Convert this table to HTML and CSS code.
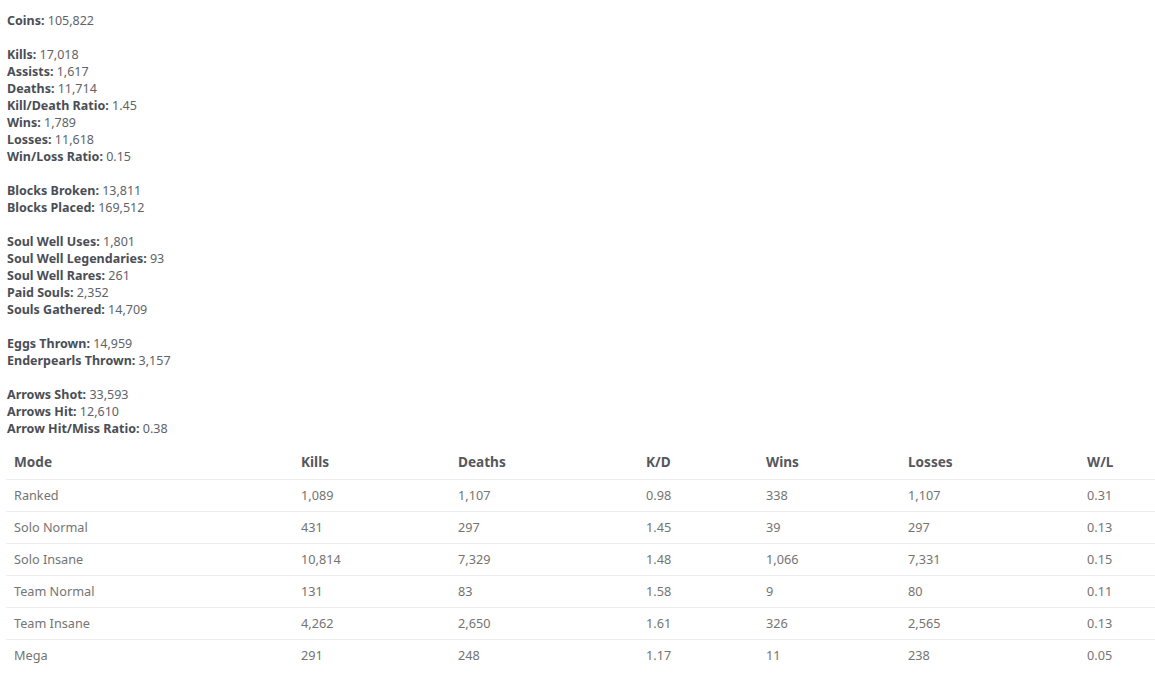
FILE: index.html
```html
<!DOCTYPE html>
<html>
<head>
<meta charset="utf-8">
<link rel="stylesheet" href="styles.css">
</head>
<body>
<div class="page">
  <div class="stats">
    <div class="group">
      <div class="line"><span class="label">Coins:</span> 105,822</div>
    </div>
    <div class="group">
      <div class="line"><span class="label">Kills:</span> 17,018</div>
      <div class="line"><span class="label">Assists:</span> 1,617</div>
      <div class="line"><span class="label">Deaths:</span> 11,714</div>
      <div class="line"><span class="label">Kill/Death Ratio:</span> 1.45</div>
      <div class="line"><span class="label">Wins:</span> 1,789</div>
      <div class="line"><span class="label">Losses:</span> 11,618</div>
      <div class="line"><span class="label">Win/Loss Ratio:</span> 0.15</div>
    </div>
    <div class="group">
      <div class="line"><span class="label">Blocks Broken:</span> 13,811</div>
      <div class="line"><span class="label">Blocks Placed:</span> 169,512</div>
    </div>
    <div class="group">
      <div class="line"><span class="label">Soul Well Uses:</span> 1,801</div>
      <div class="line"><span class="label">Soul Well Legendaries:</span> 93</div>
      <div class="line"><span class="label">Soul Well Rares:</span> 261</div>
      <div class="line"><span class="label">Paid Souls:</span> 2,352</div>
      <div class="line"><span class="label">Souls Gathered:</span> 14,709</div>
    </div>
    <div class="group">
      <div class="line"><span class="label">Eggs Thrown:</span> 14,959</div>
      <div class="line"><span class="label">Enderpearls Thrown:</span> 3,157</div>
    </div>
    <div class="group last">
      <div class="line"><span class="label">Arrows Shot:</span> 33,593</div>
      <div class="line"><span class="label">Arrows Hit:</span> 12,610</div>
      <div class="line"><span class="label">Arrow Hit/Miss Ratio:</span> 0.38</div>
    </div>
  </div>
  <table class="modes">
    <thead>
      <tr>
        <th class="c1">Mode</th><th class="c2">Kills</th><th class="c3">Deaths</th><th class="c4">K/D</th><th class="c5">Wins</th><th class="c6">Losses</th><th class="c7">W/L</th>
      </tr>
    </thead>
    <tbody>
      <tr><td>Ranked</td><td>1,089</td><td>1,107</td><td>0.98</td><td>338</td><td>1,107</td><td>0.31</td></tr>
      <tr><td>Solo Normal</td><td>431</td><td>297</td><td>1.45</td><td>39</td><td>297</td><td>0.13</td></tr>
      <tr><td>Solo Insane</td><td>10,814</td><td>7,329</td><td>1.48</td><td>1,066</td><td>7,331</td><td>0.15</td></tr>
      <tr><td>Team Normal</td><td>131</td><td>83</td><td>1.58</td><td>9</td><td>80</td><td>0.11</td></tr>
      <tr><td>Team Insane</td><td>4,262</td><td>2,650</td><td>1.61</td><td>326</td><td>2,565</td><td>0.13</td></tr>
      <tr><td>Mega</td><td>291</td><td>248</td><td>1.17</td><td>11</td><td>238</td><td>0.05</td></tr>
    </tbody>
  </table>
</div>
</body>
</html>
```
FILE: styles.css
```css
html, body {
  margin: 0;
  padding: 0;
  background: #ffffff;
}
body {
  font-family: "Noto Sans", "Open Sans", sans-serif;
  font-size: 12.5px;
  line-height: 17px;
  color: #5f636a;
}
.page {
  padding: 12px 0 0 6px;
}
.stats {
  padding-left: 1px;
}
.group {
  margin-bottom: 17px;
}
.group.last {
  margin-bottom: 0;
}
.label {
  font-weight: 700;
  color: #4a4e56;
}
.modes {
  width: 1149px;
  margin-top: 11px;
  border-collapse: collapse;
  table-layout: fixed;
}
.modes th {
  text-align: left;
  font-weight: 700;
  font-size: 13.6px;
  color: #55575c;
  padding: 5px 8px 9px 8px;
  line-height: 17px;
}
.modes td {
  border-top: 1px solid #eeeeee;
  padding: 7px 8px;
  font-size: 12.7px;
  color: #747474;
  line-height: 17px;
}
.c1 { width: 271px; }
.c2 { width: 141px; }
.c3 { width: 172px; }
.c4 { width: 104px; }
.c5 { width: 126px; }
.c6 { width: 163px; }
.c7 { width: 60px; }
```
